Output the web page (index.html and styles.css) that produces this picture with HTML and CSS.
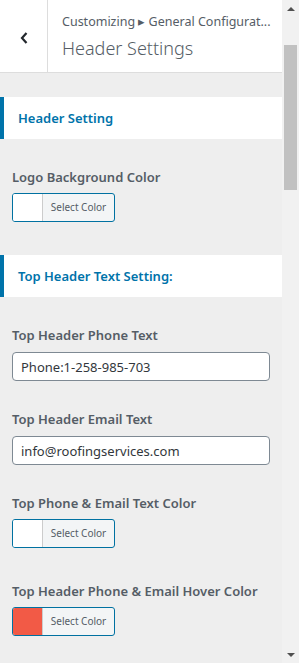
FILE: index.html
```html
<!DOCTYPE html>
<html>
<head>
    <title>Header Settings</title>
    <link rel="stylesheet" href="styles.css">
</head>
<body>
    <div class="frame">
        <div class="panel">
            <div class="panel-header">
                <button class="back-btn" aria-label="Back">
                    <svg width="10" height="14" viewBox="0 0 10 14"><path d="M7.5 2 L3 7 L7.5 12" fill="none" stroke="#23282d" stroke-width="2.2"/></svg>
                </button>
                <div class="panel-title">
                    <span class="crumb">Customizing &#9656; General Configurat...</span>
                    <h2>Header Settings</h2>
                </div>
            </div>

            <div class="panel-body">
                <div class="section-title">Header Setting</div>

                <div class="control color-control">
                    <label>Logo Background Color</label>
                    <button class="color-btn"><span class="swatch"></span><span class="btn-text">Select Color</span></button>
                </div>

                <div class="section-title">Top Header Text Setting:</div>

                <div class="control">
                    <label>Top Header Phone Text</label>
                    <input type="text" value="Phone:1-258-985-703">
                </div>

                <div class="control">
                    <label>Top Header Email Text</label>
                    <input type="text" value="info@roofingservices.com">
                </div>

                <div class="control color-control">
                    <label>Top Phone &amp; Email Text Color</label>
                    <button class="color-btn"><span class="swatch"></span><span class="btn-text">Select Color</span></button>
                </div>

                <div class="control color-control">
                    <label>Top Header Phone &amp; Email Hover Color</label>
                    <button class="color-btn"><span class="swatch swatch-red"></span><span class="btn-text">Select Color</span></button>
                </div>
            </div>
        </div>

        <div class="scrollbar">
            <div class="arrow arrow-up"></div>
            <div class="track"><div class="thumb"></div></div>
            <div class="arrow arrow-down"></div>
        </div>
    </div>
</body>
</html>
```

FILE: styles.css
```css
* {
    margin: 0;
    padding: 0;
    box-sizing: border-box;
}

body {
    background: #eee;
    font-family: 'Noto Sans', 'Open Sans', sans-serif;
    color: #555d66;
    height: 663px;
    overflow: hidden;
}

.frame {
    display: flex;
    height: 663px;
}

.panel {
    flex: 1;
    min-width: 0;
}

.panel-header {
    display: flex;
    height: 73px;
    background: #fff;
    border-bottom: 1px solid #ddd;
}

.back-btn {
    width: 48px;
    border: none;
    border-right: 1px solid #ddd;
    background: #fff;
    display: flex;
    align-items: center;
    justify-content: center;
    padding-top: 4px;
}

.panel-title {
    padding: 12px 0 0 14px;
    white-space: nowrap;
    overflow: hidden;
}

.crumb {
    display: block;
    font-size: 12.5px;
    line-height: 20px;
    color: #555d66;
}

.panel-title h2 {
    font-size: 18px;
    font-weight: 300;
    line-height: 28px;
    color: #555d66;
    margin-top: 2px;
}

.panel-body {
    padding-top: 24px;
}

.section-title {
    background: #fff;
    border-left: 4px solid #0073aa;
    height: 42px;
    line-height: 42px;
    padding-left: 14px;
    font-size: 13px;
    font-weight: 600;
    color: #0073aa;
    margin-bottom: 28px;
}

.control {
    padding: 0 12px;
    margin-bottom: 28px;
}

.color-control {
    margin-bottom: 33px;
}

.control label {
    display: block;
    font-size: 13px;
    font-weight: 600;
    line-height: 20px;
    margin-bottom: 7px;
}

.color-control label {
    margin-bottom: 6px;
}

.control input {
    width: 258px;
    height: 29px;
    border: 1px solid #7e8993;
    border-radius: 4px;
    background: #fff;
    padding: 0 8px;
    font-family: 'Noto Sans', 'Open Sans', sans-serif;
    font-size: 13px;
    color: #32373c;
}

.color-btn {
    display: flex;
    width: 103px;
    height: 29px;
    border: 1px solid #0071a1;
    border-radius: 3px;
    background: #f3f5f6;
    overflow: hidden;
}

.swatch {
    width: 30px;
    height: 100%;
    background: #fff;
    border-right: 1px solid #ccc;
}

.swatch-red {
    background: #f25a46;
}

.btn-text {
    flex: 1;
    font-family: 'Noto Sans', 'Open Sans', sans-serif;
    font-size: 10px;
    line-height: 27px;
    color: #555d66;
    text-align: center;
}

.scrollbar {
    width: 17px;
    background: #f1f1f1;
    display: flex;
    flex-direction: column;
}

.arrow {
    height: 17px;
    display: flex;
    align-items: center;
    justify-content: center;
}

.arrow::after {
    content: '';
    border-left: 4px solid transparent;
    border-right: 4px solid transparent;
}

.arrow-up::after {
    border-bottom: 4px solid #505050;
}

.arrow-down::after {
    border-top: 4px solid #505050;
}

.track {
    flex: 1;
    padding: 0 2px;
}

.thumb {
    margin-top: 28px;
    height: 145px;
    background: #c1c1c1;
}
```
